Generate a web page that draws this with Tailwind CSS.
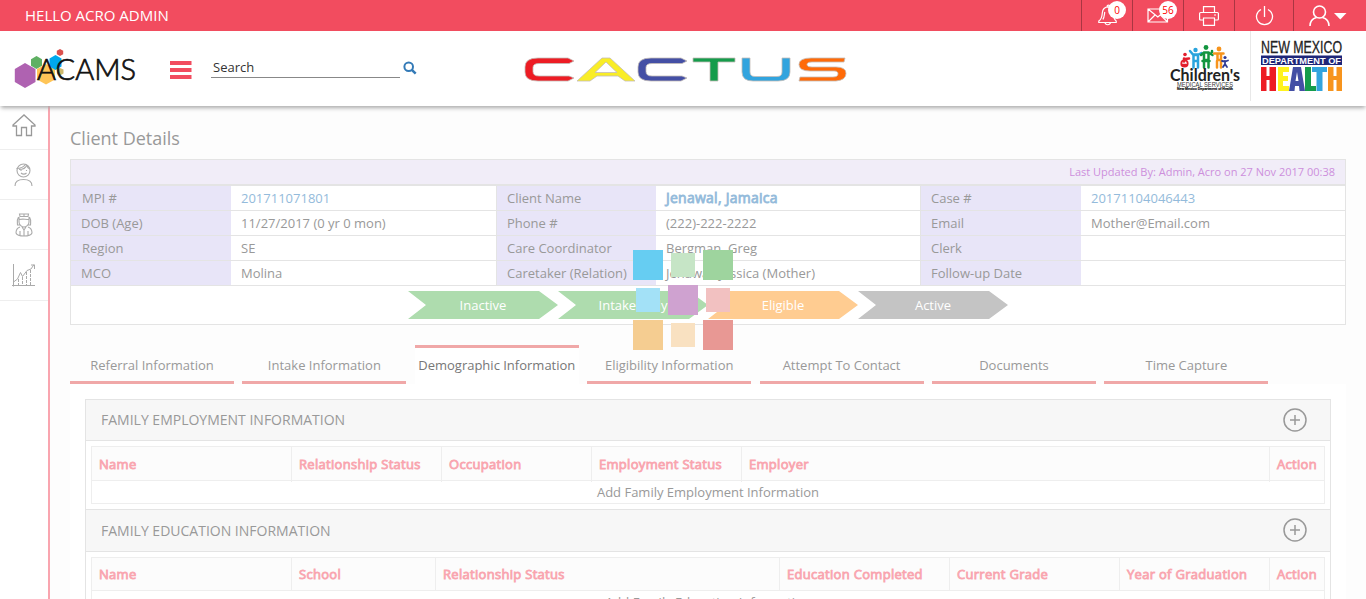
<!DOCTYPE html>
<html lang="en">
<head>
<meta charset="utf-8">
<title>ACAMS</title>
<script src="https://cdn.jsdelivr.net/npm/@tailwindcss/browser@4"></script>
</head>
<body class="relative h-[599px] overflow-hidden bg-[#fdfdfd] font-['Open_Sans',sans-serif] text-[13px] text-[#999]">
<!-- top bar -->
<div class="flex h-[31px] bg-[#f24c5f] text-white">
  <div class="grow pl-[25px] text-[15px] leading-[31px]">HELLO ACRO ADMIN</div>
  <div class="relative w-[51px] border-l border-[#a93642]">
    <svg class="absolute left-[16px] top-[4px]" width="20" height="22" viewBox="0 0 20 22" fill="none" stroke="#fff" stroke-width="1.2"><path d="M.8 18.500h17.400v-1.500c-2.500-1.500-2.500-4-2.500-8 0-3.500-2-6-5.200-6.200-4 0-6 2.700-6.200 6.200-.3 4-.8 6.500-3.500 8zM7 18.500c.5 3 5 3 5.500 0M9 2.700c0-2.200 3-2.200 3 0M4.800 15.500c1.700-1.500 1.400-5 2-7.500"/></svg>
    <span class="absolute left-[26px] top-[1px] h-[18px] w-[18px] rounded-full bg-white text-center text-[10px] leading-[18px] text-[#f00]">0</span>
  </div>
  <div class="relative w-[51px] border-l border-[#a93642]">
    <svg class="absolute left-[14px] top-[8px]" width="22" height="15" fill="none" stroke="#fff" stroke-width="1.200"><path d="M1 1h19.500v13H1zM1 1l9.800 8L20.500 1M1 14l7-7M20.500 14l-7-7"/></svg>
    <span class="absolute left-[26px] top-[1px] h-[18px] w-[18px] rounded-full bg-white text-center text-[10px] leading-[18px] text-[#f00]">56</span>
  </div>
  <div class="w-[51px] border-l border-[#a93642] pl-[15px] pt-[6px]">
    <svg width="20" height="20" fill="none" stroke="#fff" stroke-width="1.200"><path d="M4.500 6V.6h11V6M4.500 14H1.600Q.6 14 .6 13V7.500Q.6 6.500 1.600 6.500h16.800q1 0 1 1V13q0 1-1 1h-2.900M4.500 12h11v7.400h-11zM15 9h2"/></svg>
  </div>
  <div class="w-[59px] border-l border-[#a93642] pl-[20px] pt-[5px]">
    <svg width="20" height="21" fill="none" stroke="#fff" stroke-width="1.300"><path d="M9.500 1v11M6 4.500a8 8 0 1 0 7 0"/></svg>
  </div>
  <div class="w-[73px] border-l border-[#a93642] pl-[15px] pt-[5px]">
    <svg width="40" height="22" fill="none" stroke="#fff" stroke-width="1.600"><circle cx="10.500" cy="7" r="6"/><path d="M1 21c0-5 3-7.500 6.500-8.500M20 21c0-5-3-7.500-6.500-8.500"/><path d="M25 8h12.500l-6.200 6.500z" fill="#fff" stroke="none"/></svg>
  </div>
</div>
<!-- header -->
<header class="relative z-10 flex h-[75px] bg-white shadow-[0_3px_4px_-1px_#aaa]">
  <svg class="ml-[14px] mt-[15px]" width="124" height="46">
    <path d="M11 17l10.500 6v13L11 42 .8 36V23z" fill="#af62b1"/><path d="M22.500 10l5.500 3.200v6.600L22.500 23 17 19.800v-6.600z" fill="#5fb063"/><path d="M32 18l9 5v10.500l-9 5-9-5V23z" fill="#ffc557"/><path d="M41.500 9l6 3.500v8l-6 3.500-6-3.500v-8z" fill="#00a8ec"/><path d="M46 22l3.500 1.500v4L46 29.500 43 28v-4z" fill="#cdb86c"/><path d="M46 3l3.200 1.800v3.500L46 10l-3.200-1.700V4.800z" fill="#db504d"/>
    <text x="23" y="34" font-family="Lato" font-weight="300" font-size="29" textLength="99" lengthAdjust="spacingAndGlyphs" fill="#111" stroke="#111" stroke-width=".7">ACAMS</text>
  </svg>
  <svg class="ml-8 mt-[30px]" width="22" height="20" fill="#f24c5f"><path d="M0 0h21.500v4H0zM0 7h21.500v4H0zM0 14h21.500v4H0z"/></svg>
  <div class="ml-[19px] mt-[26px] h-[21px] w-[189px] border-b border-[#888] pl-[2px] leading-[20px] text-[#333]">Search</div>
  <svg class="ml-[3px] mt-[30px]" width="14" height="14" fill="none" stroke="#337ab7" stroke-width="2"><circle cx="5.700" cy="5.700" r="4.300"/><path d="M8.800 8.800l3.900 3.900" stroke-width="2.500"/></svg>
  <svg class="ml-[107px] mt-[26px]" width="325" height="26" viewBox="0 0 325 26">
    <g stroke="#c4bcb8" stroke-width=".8">
    <path fill="#ed1c24" d="M14 1h30l6 3-5 2.500H15q-6 0-6 4v4q0 4.500 6 4.500h30l5 2-6 3H14Q1 24 1 15V10Q1 1 14 1z"/>
    <path fill="#f9ed27" fill-rule="evenodd" d="M78 1h8l25 23h-10l-7-5H73l-7 5H53zM82 5L71 15.500h22z"/>
    <path fill="#444fa5" d="M127 1h30l6 3-5 2.500h-30q-6 0-6 4v4q0 4.500 6 4.500h30l5 2-6 3h-30q-13 0-13-9v-5q0-9 13-9z"/>
    <path fill="#159c4b" d="M169 1h42v4h-17v19h-8V5h-17z"/>
    <path fill="#32a4de" d="M218 1h8v14q0 4.500 5 4.500h22q5 0 5-4.500V1h8v14q0 9-12 9h-25q-11 0-11-9z"/>
    <path fill="#ff6a08" d="M287 1h34l-1 4h-32q-5 0-5 2.500t5 2.500h24q10 0 10 6.500T312 24h-37l1-4h33q5 0 5-3.200t-5-2.800h-23q-11 0-11-6.500T287 1z"/>
    </g>
  </svg>
  <svg class="ml-[320px] mt-[13px]" width="76" height="50" viewBox="0 0 76 50">
    <g fill="none" stroke-linecap="round" stroke-width="2.500">
    <g stroke="#e21f2d"><circle cx="16" cy="10.500" r="1.800" fill="#e21f2d" stroke="none"/><circle cx="15.500" cy="19.500" r="3.200" stroke-width="1.800"/><path d="M15 14.500v3M16 15l4-.5M13 21h4"/></g>
    <g stroke="#2aa4dd"><circle cx="26.500" cy="6" r="2.200" fill="#2aa4dd" stroke="none"/><path d="M21 7l3 3.500h5.500l3-1.500M24.500 11v6h4.500v-6zM24.500 17v6.500M29 17v6.500"/></g>
    <g stroke="#12953f"><circle cx="37" cy="3.500" r="2.400" fill="#12953f" stroke="none"/><path d="M32 11l3-2.500h4.500l4 2.500M35 10v6h4.500v-6M33.500 17h7M35 17v6.500M39.500 17v6.500M43 7v1"/></g>
    <g stroke="#f7941d"><circle cx="50" cy="5" r="2.400" fill="#f7941d" stroke="none"/><path d="M45 9.500h9.500M48.500 10v6h3.500v-6M48 17v6.500M52 17v6.500"/></g>
    <g stroke="#303c97" stroke-width="1.800"><circle cx="56" cy="13.500" r="1.600" fill="#303c97" stroke="none"/><path d="M53 17l3 .500 3-1M56 17v3M56 20l-2 3M56 20l2 3"/></g>
    </g>
    <text x="1" y="36.500" font-family="Lato" font-size="17.500" font-weight="bold" textLength="70" lengthAdjust="spacingAndGlyphs" fill="#222">Children's</text>
    <text x="8" y="42.500" font-family="Liberation Sans" font-size="7" textLength="56" lengthAdjust="spacingAndGlyphs" fill="#333">MEDICAL SERVICES</text>
    <text x="8" y="46" font-family="Liberation Sans" font-size="3.500" font-weight="bold" textLength="56" lengthAdjust="spacingAndGlyphs" fill="#111" stroke="#111" stroke-width=".2">New Mexico Department of Health</text>
  </svg>
  <div class="ml-[5px] h-[70px] w-px bg-[#e8e8e8]"></div>
  <svg class="ml-[10px] mt-[7px]" width="83" height="54" viewBox="0 -2 83 54" font-family="Liberation Sans">
    <text y="12.500" font-size="16" textLength="81" lengthAdjust="spacingAndGlyphs" fill="#222" stroke="#222" stroke-width=".3">NEW MEXICO</text>
    <path d="M0 15.500h81v9.500H0z" fill="#1e2679"/><text x="1" y="23.800" font-size="9.500" font-weight="bold" textLength="79" lengthAdjust="spacingAndGlyphs" fill="#fff">DEPARTMENT OF</text>
    <path fill="#ed1c24" d="M0 27h5.500v9h3v-9H15v24H8.500V40h-3v11H0z"/><path fill="#fff21f" d="M17 27h11v5h-6v4h5v5h-5v5h6v5H17z"/><path fill="#444fa5" fill-rule="evenodd" d="M32 27h8l4 24h-5.500l-.5-5h-4l-.5 5H28zM36 32l-1.500 9h3z"/><path fill="#159c4b" d="M44 27h6v19h5v5H44z"/><path fill="#32a4de" d="M51 27h15v5h-4.500v19h-6V32H51z"/><path fill="#f7941d" d="M67 27h5.500v9h3v-9H81v24h-5.500V40h-3v11H67z"/>
  </svg>
</header>
<div class="flex h-[493px] overflow-hidden">
  <!-- side navigation -->
  <nav class="w-[50px] shrink-0 border-r-2 border-[#f9a5af] bg-white">
    <div class="h-[44px] border-b border-[#eee] pl-[12px] pt-[8px]"><svg width="24" height="23" fill="none" stroke="#999" stroke-width="1.300"><path d="M1 11L12 1l11 10v1h-3.500v9.500H14.500v-8h-5v8H4.500V12H1z"/></svg></div>
    <div class="h-[50px] border-b border-[#eee] pl-[14px] pt-[12px]"><svg width="20" height="24" fill="none" stroke="#aaa" stroke-width="1.100"><circle cx="9.500" cy="8.500" r="6.500"/><path d="M2.500 6.500c4 0 7-1 9.500-4.500M5 7.500c4 0 7-2 8-4.500 0 2 1 3 2.800 4M7 11c1.500 1.500 4 1.500 5.500 0M7 8v1M12.500 8v1M1 24c0-5 3-6.500 8.500-6.500S18 19 18 24"/></svg></div>
    <div class="h-[50px] border-b border-[#eee] pl-[15px] pt-[12px]"><svg width="18" height="25" fill="none" stroke="#aaa" stroke-width="1.100"><path d="M5 4.500l-.5-2.500h9l-.5 2.500zM9 2v3M4 5v5c0 3 3 5 5 5s5-2 5-5V5M4 7.500c5-1 5 0 10 0M3.500 5c-2 3-1 6-1 8h2.500M14.500 5c2 3 1 6 1 8H13M5 15c-3.500 1-4 4-4 6 1 2.500 4 3 8 3s7-.5 8-3c0-2-.5-5-4-6M5 19v4.500M13 19v4.500M9 17v7M7 15l2 3 2-3"/></svg></div>
    <div class="h-[51px] border-b border-[#eee] pl-[12px] pt-[13px]"><svg width="24" height="24" fill="none" stroke="#aaa"><path d="M1.500 1v22.500M0 22.500h23M1.500 19l4-3 3-6.500 2 4 4.500-6 4-1.500 3-4.500M19 2h3.500v4"/><path d="M6.500 16v6M10.500 14v8M14.500 9v13M18.500 7v15" stroke-dasharray="3 1"/></svg></div>
  </nav>
  <main class="grow pl-5 pr-5 pt-[20px]">
    <h1 class="h-[33px] text-[18px] leading-[24px]">Client Details</h1>
    <section class="h-[166px] border border-[#e4e4e4] bg-white">
      <div class="h-[26px] border-b-2 border-[#e4e4e4] bg-[#f1edf8] pr-[10px] text-right text-[11px] leading-[24px] text-[#cd8fdc]">Last Updated By: Admin, Acro on 27 Nov 2017 00:38</div>
      <div class="grid h-[100px] grid-cols-[160px_266px_159px_265px_160px_1fr] grid-rows-[repeat(4,25px)] leading-[24px] *:border-b *:border-[#e4e4e4] *:pl-[10px]">
        <div class="bg-[#e8e5f8] pl-[11px]!">MPI #</div><div class="border-r text-[#94bbdb]">201711071801</div><div class="bg-[#e8e5f8]">Client Name</div><div class="border-r text-[14px] tracking-[0.25px] text-[#94bbdb] [-webkit-text-stroke:0.8px_#94bbdb]">Jenawal, Jamaica</div><div class="bg-[#e8e5f8]">Case #</div><div class="text-[#94bbdb]">20171104046443</div>
        <div class="bg-[#e8e5f8]">DOB (Age)</div><div class="border-r">11/27/2017 (0 yr 0 mon)</div><div class="bg-[#e8e5f8]">Phone #</div><div class="border-r">(222)-222-2222</div><div class="bg-[#e8e5f8]">Email</div><div>Mother@Email.com</div>
        <div class="bg-[#e8e5f8] pl-[11px]!">Region</div><div class="border-r">SE</div><div class="bg-[#e8e5f8]">Care Coordinator</div><div class="border-r">Bergman, Greg</div><div class="bg-[#e8e5f8]">Clerk</div><div></div>
        <div class="bg-[#e8e5f8]">MCO</div><div class="border-r">Molina</div><div class="bg-[#e8e5f8]">Caretaker (Relation)</div><div class="border-r">Jenawal, Jessica (Mother)</div><div class="bg-[#e8e5f8]">Follow-up Date</div><div></div>
      </div>
      <div class="flex justify-center pt-[5px] text-center leading-[28px] text-white *:h-[28px] *:w-[150px] *:[clip-path:polygon(0_0,131px_0,100%_50%,131px_100%,0_100%,18px_50%)]">
        <div class="bg-[#aedcae]">Inactive</div><div class="bg-[#aedcae]">Intake Only</div><div class="bg-[#ffcc91]">Eligible</div><div class="bg-[#c4c4c4]">Active</div>
      </div>
    </section>
    <div class="mt-5 flex h-[39px] gap-[8.400px] text-center leading-[34px] *:w-[164px] *:border-b-3 *:border-[#f0a8a8] *:pt-[3px]">
      <div>Referral Information</div><div>Intake Information</div><div class="border-b-0! border-t-3 bg-white pt-0! text-[#777]">Demographic Information</div><div>Eligibility Information</div><div>Attempt To Contact</div><div>Documents</div><div>Time Capture</div>
    </div>
    <div class="h-[215px] overflow-hidden bg-white px-[15px] pt-[15px]">
      <div class="border border-b-0 border-[#e4e4e4]">
        <div class="flex h-[41px] items-center justify-between border-b border-[#e4e4e4] bg-[#f7f7f7] pb-[1px] pl-[15px] pr-[23px] text-[14px]"><span class="pb-px">FAMILY EMPLOYMENT INFORMATION</span><svg width="24" height="24" fill="none" stroke="#999" stroke-width="1.500"><circle cx="12" cy="12" r="11"/><path d="M7 12h10M12 7v10"/></svg></div>
        <div class="mx-[5px] mt-[5px] h-[58px] border border-[#eee]">
          <div class="grid h-[34px] grid-cols-[200px_150px_150px_150px_1fr_54px] border-b border-[#eee] bg-[#fcfcfc] leading-[35px] tracking-[0.3px] text-[#f9a5af] [-webkit-text-stroke:0.8px_#f9a5af] *:border-r *:border-[#eee] *:pl-[7px]"><div>Name</div><div>Relationship Status</div><div>Occupation</div><div>Employment Status</div><div>Employer</div><div class="border-r-0!">Action</div></div>
          <div class="text-center leading-[22px]">Add Family Employment Information</div>
        </div>
        <div class="mt-[5px] flex h-[43px] items-center justify-between border-y border-[#e4e4e4] bg-[#f7f7f7] pb-[2px] pl-[15px] pr-[23px] text-[14px]"><span class="pt-px">FAMILY EDUCATION INFORMATION</span><svg width="24" height="24" fill="none" stroke="#999" stroke-width="1.500"><circle cx="12" cy="12" r="11"/><path d="M7 12h10M12 7v10"/></svg></div>
        <div class="mx-[5px] mt-[5px] border border-b-0 border-[#eee]">
          <div class="grid h-[33px] grid-cols-[200px_144px_344px_170px_170px_150px_1fr] border-b border-[#eee] bg-[#fcfcfc] leading-[33px] tracking-[0.3px] text-[#f9a5af] [-webkit-text-stroke:0.8px_#f9a5af] *:border-r *:border-[#eee] *:pl-[7px]"><div>Name</div><div>School</div><div>Relationship Status</div><div>Education Completed</div><div>Current Grade</div><div>Year of Graduation</div><div class="border-r-0!">Action</div></div>
          <div class="text-center leading-[22px]">Add Family Education Information</div>
        </div>
      </div>
    </div>
  </main>
</div>
<!-- loading indicator -->
<div class="absolute left-[633px] top-[250px] z-20 grid grid-cols-[repeat(3,30px)] grid-rows-[repeat(3,30px)] place-items-center gap-[5px]">
  <i class="size-[30px] bg-[#66cdf2]"></i><i class="size-6 bg-[#c6e5c6]"></i><i class="size-[30px] bg-[#9ed49e]"></i>
  <i class="size-6 bg-[#a3e1f7]"></i><i class="size-[30px] bg-[#cfa2d0]"></i><i class="size-6 bg-[#f2c1c1]"></i>
  <i class="size-[30px] bg-[#f5cd91]"></i><i class="size-6 bg-[#f9e1c1]"></i><i class="size-[30px] bg-[#e89894]"></i>
</div>
</body>
</html>
